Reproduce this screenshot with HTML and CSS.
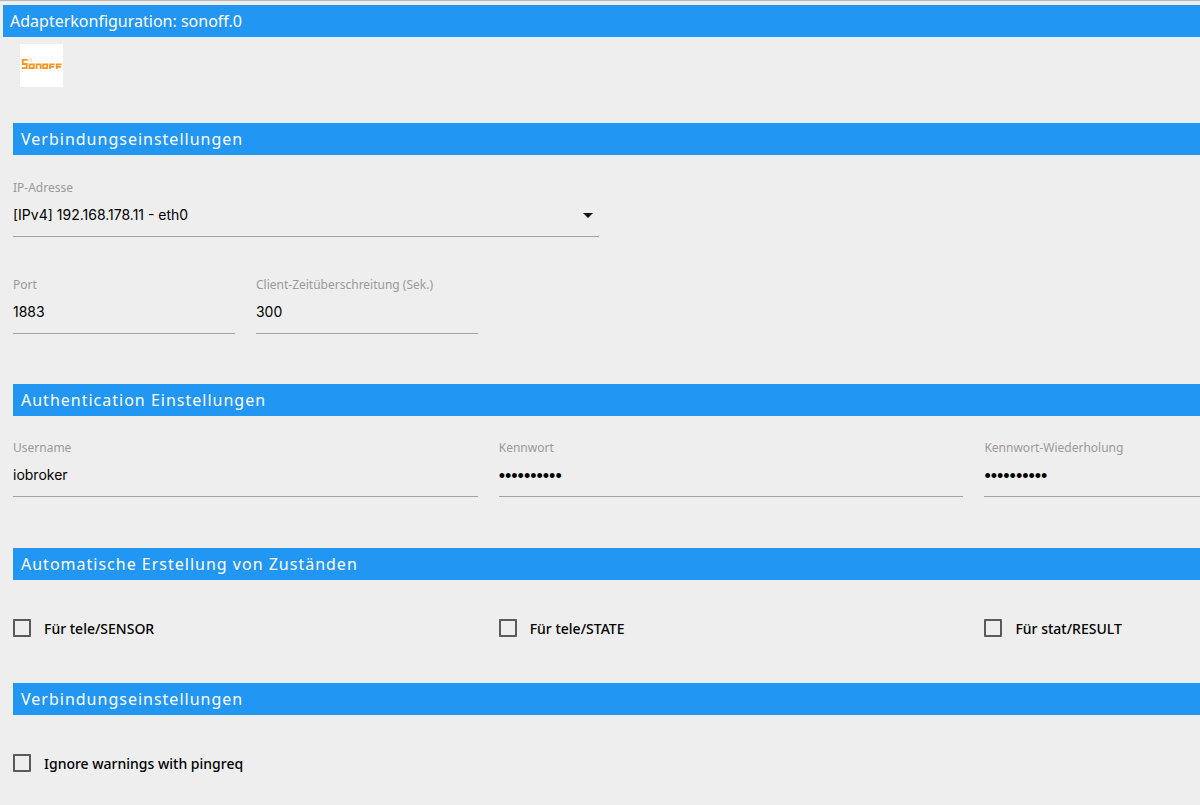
FILE: index.html
```html
<!DOCTYPE html>
<html lang="de">
<head>
<meta charset="utf-8">
<meta name="viewport" content="width=device-width, initial-scale=1">
<title>Adapterkonfiguration: sonoff.0</title>
<link rel="stylesheet" href="styles.css">
</head>
<body>
<header class="titlebar"><h1 class="titlebar-text">Adapterkonfiguration: sonoff.0</h1></header>
<main class="config">
  <div class="logo">
    <svg viewBox="0 0 43 43" width="43" height="43" role="img" aria-label="Sonoff">
      <g fill="none" stroke="#f7941d" stroke-width="1.8">
        <path d="M7.5 15.8H2.7V20H6.7V24.2H1.8"/>
        <path d="M9.6 20.4H13.8V24.2H9.6Z"/>
        <path d="M16.6 25V20.4H20.6V25"/>
        <path d="M23.2 20.4H27.2V24.2H23.2Z"/>
        <path d="M30 25V20.4H34.8M30 22.9H34.2"/>
        <path d="M36.8 25V20.4H41.6M36.8 22.9H41"/>
      </g>
      <path d="M9.3 14.4Q7.9 16 9.3 17.8M11.6 14Q10 16.2 11.6 18.2" fill="none" stroke="#fbd3a0" stroke-width="1"/>
    </svg>
  </div>

  <h2 class="section-title">Verbindungseinstellungen</h2>
  <div class="row row-half">
    <div class="field">
      <label class="field-label" for="ip">IP-Adresse</label>
      <div class="select-wrap">
        <select class="field-input" id="ip"><option>[IPv4] 192.168.178.11 - eth0</option></select>
        <svg class="caret" viewBox="0 0 10 5" width="10" height="5" aria-hidden="true"><path d="M0 0H10L5 5Z" fill="#111"/></svg>
      </div>
    </div>
  </div>
  <div class="row row-small">
    <div class="field">
      <label class="field-label" for="port">Port</label>
      <input class="field-input" id="port" type="text" value="1883">
    </div>
    <div class="field">
      <label class="field-label" for="timeout">Client-Zeitüberschreitung (Sek.)</label>
      <input class="field-input" id="timeout" type="text" value="300">
    </div>
  </div>

  <h2 class="section-title">Authentication Einstellungen</h2>
  <div class="row row-wide">
    <div class="field">
      <label class="field-label" for="user">Username</label>
      <input class="field-input" id="user" type="text" value="iobroker">
    </div>
    <div class="field">
      <label class="field-label" for="pass">Kennwort</label>
      <input class="field-input password" id="pass" type="password" value="kennwort12">
    </div>
    <div class="field">
      <label class="field-label" for="pass2">Kennwort-Wiederholung</label>
      <input class="field-input password" id="pass2" type="password" value="kennwort12">
    </div>
  </div>

  <h2 class="section-title">Automatische Erstellung von Zuständen</h2>
  <div class="row row-wide checks">
    <label class="check"><input class="box" type="checkbox"><span class="check-text">Für tele/SENSOR</span></label>
    <label class="check"><input class="box" type="checkbox"><span class="check-text">Für tele/STATE</span></label>
    <label class="check"><input class="box" type="checkbox"><span class="check-text">Für stat/RESULT</span></label>
  </div>

  <h2 class="section-title">Verbindungseinstellungen</h2>
  <div class="row checks">
    <label class="check"><input class="box" type="checkbox"><span class="check-text">Ignore warnings with pingreq</span></label>
  </div>
</main>
</body>
</html>
```
FILE: styles.css
```css
* { box-sizing: border-box; }
body {
  margin: 0;
  background: #eee;
  color: #000;
  font-family: "Noto Sans", "Open Sans", sans-serif;
  border-top: 1px solid #b8b8b8;
  overflow-x: hidden;
}
.titlebar {
  margin: 4px 0 0 3px;
  padding: 0 7px;
  background: #2196f3;
  color: #fff;
}
.titlebar-text {
  margin: 0;
  font-size: 16px;
  line-height: 33px;
  height: 32px;
  font-weight: 400;
}
.config {
  padding: 7px 0 0 13px;
  overflow: hidden;
}
.logo {
  width: 43px;
  height: 43px;
  margin: 0 0 36px 7px;
  background: #fff;
}
.logo svg { display: block; }
.section-title {
  margin: 0;
  padding: 0 8px;
  background: #2196f3;
  color: #fff;
  font-size: 16px;
  line-height: 32px;
  font-weight: 400;
  letter-spacing: 1px;
}
.row {
  display: grid;
  column-gap: 21px;
  padding: 25px 0 0;
}
.row-half { grid-template-columns: 49.4%; padding-bottom: 15px; }
.row-small { grid-template-columns: repeat(2, 18.7%); padding-bottom: 50px; }
.row-wide { grid-template-columns: repeat(3, 39.15%); padding: 24px 0 51px; }
.field {
  display: flex;
  flex-direction: column;
}
.field-label {
  color: #9a9a9a;
  font-size: 12px;
  line-height: 16px;
}
.field-input {
  appearance: none;
  width: 100%;
  height: 41px;
  margin: 0;
  padding: 0 0 4px;
  border: 0;
  border-bottom: 1px solid #a2a2a2;
  border-radius: 0;
  background: transparent;
  color: #000;
  font: 14px "Inter", sans-serif;
  outline: none;
}
.password {
  padding: 1px 0 0;
  font: 18px "Liberation Sans", sans-serif;
}
.select-wrap { display: flex; position: relative; }
.caret {
  position: absolute;
  right: 6px;
  top: 17px;
  pointer-events: none;
}
.checks {
  padding: 35px 0 42px;
}
.check {
  display: flex;
  align-items: center;
  gap: 13px;
  font-size: 14px;
  font-weight: 500;
  line-height: 24px;
}
.check-text { padding-top: 2px; }
.box {
  appearance: none;
  flex: none;
  width: 18px;
  height: 18px;
  margin: 0;
  border: 2px solid #5a5a5a;
  border-radius: 1px;
}
```
